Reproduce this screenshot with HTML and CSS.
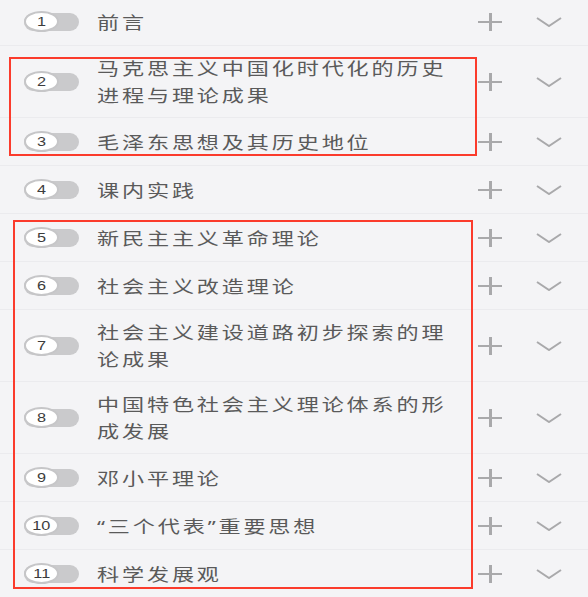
FILE: index.html
```html
<!DOCTYPE html>
<html lang="zh-CN">
<head>
    <meta charset="UTF-8">
    <meta name="viewport" content="width=device-width, initial-scale=1.0">
    <title>章节列表</title>
    <link rel="stylesheet" href="styles.css">
</head>
<body>
    <ul class="chapters">
        <li class="chapter">
            <div class="toggle"><span class="knob"><span class="num">1</span></span></div>
            <div class="title"><span class="label">前言</span></div>
            <div class="actions">
                <span class="plus"></span>
                <svg class="chevron" viewBox="0 0 26 10"><path d="M1 1l12 8 12-8"/></svg>
            </div>
        </li>
        <li class="chapter">
            <div class="toggle"><span class="knob"><span class="num">2</span></span></div>
            <div class="title"><span class="label">马克思主义中国化时代化的历史进程与理论成果</span></div>
            <div class="actions">
                <span class="plus"></span>
                <svg class="chevron" viewBox="0 0 26 10"><path d="M1 1l12 8 12-8"/></svg>
            </div>
        </li>
        <li class="chapter">
            <div class="toggle"><span class="knob"><span class="num">3</span></span></div>
            <div class="title"><span class="label">毛泽东思想及其历史地位</span></div>
            <div class="actions">
                <span class="plus"></span>
                <svg class="chevron" viewBox="0 0 26 10"><path d="M1 1l12 8 12-8"/></svg>
            </div>
        </li>
        <li class="chapter">
            <div class="toggle"><span class="knob"><span class="num">4</span></span></div>
            <div class="title"><span class="label">课内实践</span></div>
            <div class="actions">
                <span class="plus"></span>
                <svg class="chevron" viewBox="0 0 26 10"><path d="M1 1l12 8 12-8"/></svg>
            </div>
        </li>
        <li class="chapter">
            <div class="toggle"><span class="knob"><span class="num">5</span></span></div>
            <div class="title"><span class="label">新民主主义革命理论</span></div>
            <div class="actions">
                <span class="plus"></span>
                <svg class="chevron" viewBox="0 0 26 10"><path d="M1 1l12 8 12-8"/></svg>
            </div>
        </li>
        <li class="chapter">
            <div class="toggle"><span class="knob"><span class="num">6</span></span></div>
            <div class="title"><span class="label">社会主义改造理论</span></div>
            <div class="actions">
                <span class="plus"></span>
                <svg class="chevron" viewBox="0 0 26 10"><path d="M1 1l12 8 12-8"/></svg>
            </div>
        </li>
        <li class="chapter">
            <div class="toggle"><span class="knob"><span class="num">7</span></span></div>
            <div class="title"><span class="label">社会主义建设道路初步探索的理论成果</span></div>
            <div class="actions">
                <span class="plus"></span>
                <svg class="chevron" viewBox="0 0 26 10"><path d="M1 1l12 8 12-8"/></svg>
            </div>
        </li>
        <li class="chapter">
            <div class="toggle"><span class="knob"><span class="num">8</span></span></div>
            <div class="title"><span class="label">中国特色社会主义理论体系的形成发展</span></div>
            <div class="actions">
                <span class="plus"></span>
                <svg class="chevron" viewBox="0 0 26 10"><path d="M1 1l12 8 12-8"/></svg>
            </div>
        </li>
        <li class="chapter">
            <div class="toggle"><span class="knob"><span class="num">9</span></span></div>
            <div class="title"><span class="label">邓小平理论</span></div>
            <div class="actions">
                <span class="plus"></span>
                <svg class="chevron" viewBox="0 0 26 10"><path d="M1 1l12 8 12-8"/></svg>
            </div>
        </li>
        <li class="chapter">
            <div class="toggle"><span class="knob"><span class="num">10</span></span></div>
            <div class="title"><span class="label">“三个代表”重要思想</span></div>
            <div class="actions">
                <span class="plus"></span>
                <svg class="chevron" viewBox="0 0 26 10"><path d="M1 1l12 8 12-8"/></svg>
            </div>
        </li>
        <li class="chapter">
            <div class="toggle"><span class="knob"><span class="num">11</span></span></div>
            <div class="title"><span class="label">科学发展观</span></div>
            <div class="actions">
                <span class="plus"></span>
                <svg class="chevron" viewBox="0 0 26 10"><path d="M1 1l12 8 12-8"/></svg>
            </div>
        </li>
    </ul>

    <!-- annotation boxes drawn over the list -->
    <div class="mark mark-top"></div>
    <div class="mark mark-bottom"></div>
</body>
</html>
```

FILE: styles.css
```css
* {
    margin: 0;
    padding: 0;
    box-sizing: border-box;
}

body {
    font-family: "Noto Sans", "Noto Sans CJK SC", sans-serif;
    background: #f4f4f6;
    color: #555555;
    width: 588px;
    height: 597px;
    overflow: hidden;
    position: relative;
}

.chapters {
    list-style: none;
    margin-top: -2px;
}

.chapter {
    display: flex;
    align-items: center;
    min-height: 48px;
    padding: 0 15px 0 24px;
    border-bottom: 1px solid #ebebee;
}

.toggle {
    flex: 0 0 55px;
    height: 18px;
    border-radius: 9px;
    background: #cacacc;
    display: flex;
    align-items: center;
    margin-right: 18px;
}

.knob {
    flex: 0 0 35px;
    height: 21px;
    border-radius: 50%;
    background: #ffffff;
    border: 2px solid #c6c6c8;
    display: flex;
    align-items: center;
    justify-content: center;
}

.num {
    font-family: "Liberation Sans", Arial, sans-serif;
    font-size: 13px;
    color: #3c3c3c;
    transform: scaleX(1.25);
}

.title {
    flex: 1;
    padding: 9px 0 8px;
}

/* the screenshot is stretched wide, so the text is too */
.label {
    display: block;
    width: 282px;
    font-size: 17px;
    line-height: 27px;
    letter-spacing: 2.2px;
    color: #5a5a5a;
    transform: scaleX(1.3);
    transform-origin: left center;
}

.actions {
    display: flex;
    align-items: center;
    gap: 11px;
}

.plus {
    width: 48px;
    height: 20px;
    position: relative;
}

.plus::before,
.plus::after {
    content: "";
    position: absolute;
    background: #a9a9ab;
}

.plus::before {
    left: 12px;
    right: 12px;
    top: 9px;
    height: 2.5px;
}

.plus::after {
    left: 22.5px;
    width: 3px;
    top: 1px;
    bottom: 1px;
}

.chevron {
    width: 48px;
    height: 10px;
    padding: 0 11px;
    fill: none;
    stroke: #a9a9ab;
    stroke-width: 2;
}

.mark {
    position: absolute;
    border: 2px solid #fb3b2c;
}

.mark-top {
    left: 9px;
    top: 57px;
    width: 468px;
    height: 99px;
}

.mark-bottom {
    left: 13px;
    top: 220px;
    width: 460px;
    height: 369px;
}
```
